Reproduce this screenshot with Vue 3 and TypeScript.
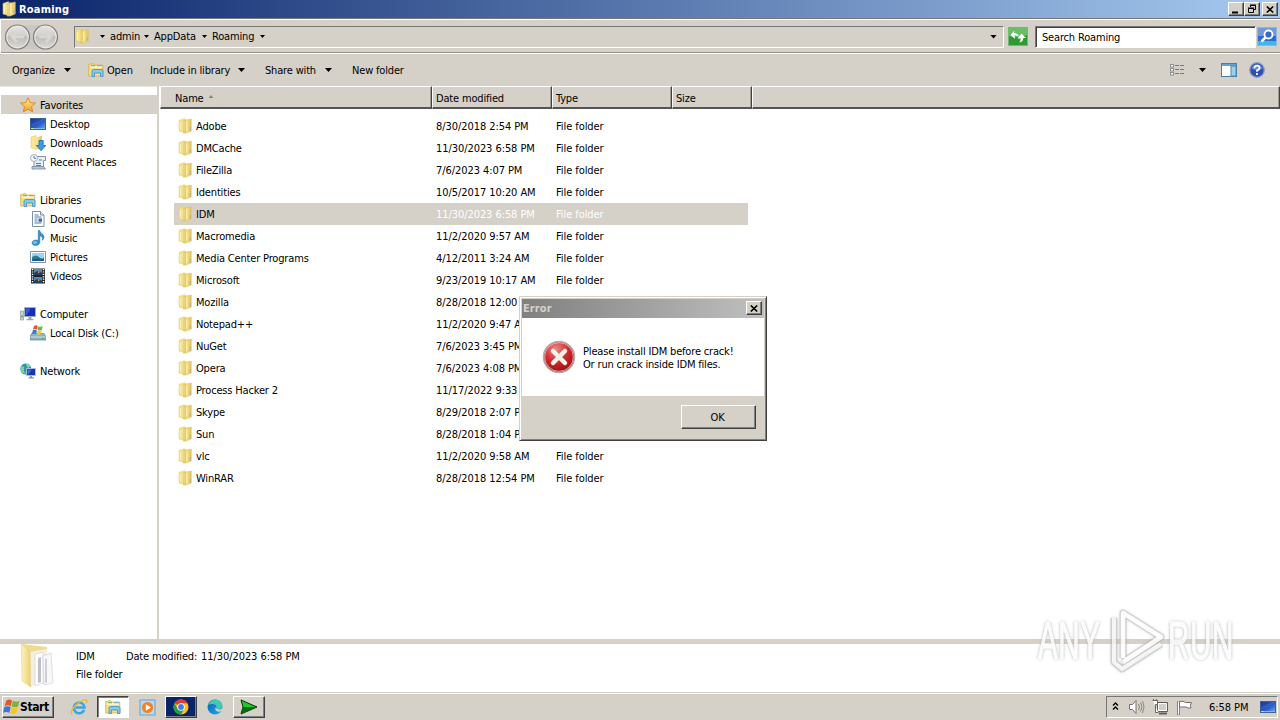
<script setup lang="ts">
interface FileRow { name: string; date: string; selected?: boolean }
interface NavItem { label: string; icon?: string; root?: boolean; active?: boolean }

const files: FileRow[] = [
  { name: 'Adobe', date: '8/30/2018 2:54 PM' },
  { name: 'DMCache', date: '11/30/2023 6:58 PM' },
  { name: 'FileZilla', date: '7/6/2023 4:07 PM' },
  { name: 'Identities', date: '10/5/2017 10:20 AM' },
  { name: 'IDM', date: '11/30/2023 6:58 PM', selected: true },
  { name: 'Macromedia', date: '11/2/2020 9:57 AM' },
  { name: 'Media Center Programs', date: '4/12/2011 3:24 AM' },
  { name: 'Microsoft', date: '9/23/2019 10:17 AM' },
  { name: 'Mozilla', date: '8/28/2018 12:00 PM' },
  { name: 'Notepad++', date: '11/2/2020 9:47 AM' },
  { name: 'NuGet', date: '7/6/2023 3:45 PM' },
  { name: 'Opera', date: '7/6/2023 4:08 PM' },
  { name: 'Process Hacker 2', date: '11/17/2022 9:33 AM' },
  { name: 'Skype', date: '8/29/2018 2:07 PM' },
  { name: 'Sun', date: '8/28/2018 1:04 PM' },
  { name: 'vlc', date: '11/2/2020 9:58 AM' },
  { name: 'WinRAR', date: '8/28/2018 12:54 PM' },
]

const nav: NavItem[] = [
  { label: 'Favorites', icon: 'star', root: true, active: true },
  { label: 'Desktop', icon: 'desktop' },
  { label: 'Downloads', icon: 'downloads' },
  { label: 'Recent Places', icon: 'recent' },
  { label: '' },
  { label: 'Libraries', icon: 'library', root: true },
  { label: 'Documents', icon: 'document' },
  { label: 'Music', icon: 'music' },
  { label: 'Pictures', icon: 'picture' },
  { label: 'Videos', icon: 'video' },
  { label: '' },
  { label: 'Computer', icon: 'computer', root: true },
  { label: 'Local Disk (C:)', icon: 'disk' },
  { label: '' },
  { label: 'Network', icon: 'network', root: true },
]

const crumbs: string[] = ['admin', 'AppData', 'Roaming']
</script>

<template>
  <div class="screen">
    <svg class="defs" width="0" height="0" aria-hidden="true">
      <defs>
        <linearGradient id="gFold" x1="0" x2="1"><stop offset="0" stop-color="#f8e99f" /><stop offset="1" stop-color="#e2c254" /></linearGradient>
        <linearGradient id="gFoldBig" x1="0" x2="1"><stop offset="0" stop-color="#fdf3bd" /><stop offset="1" stop-color="#e9cf75" /></linearGradient>
        <linearGradient id="gScreen" x1="0" y1="0" x2="1" y2="1"><stop offset="0" stop-color="#17328f" /><stop offset=".6" stop-color="#2f62c9" /><stop offset="1" stop-color="#7db3ee" /></linearGradient>
        <linearGradient id="gNavBtn" x1="0" y1="0" x2="0" y2="1"><stop offset="0" stop-color="#e6e5e2" /><stop offset=".45" stop-color="#d2cfcb" /><stop offset=".5" stop-color="#bebcb8" /><stop offset="1" stop-color="#dddbd8" /></linearGradient>
        <radialGradient id="gErr" cx=".4" cy=".25" r=".8"><stop offset="0" stop-color="#e98a86" /><stop offset=".5" stop-color="#cf2a2c" /><stop offset="1" stop-color="#98090f" /></radialGradient>
        <linearGradient id="gEdge" x1="0" y1="0" x2="1" y2="1"><stop offset="0" stop-color="#0c59a4" /><stop offset=".6" stop-color="#1b8ed8" /><stop offset="1" stop-color="#2fa8e0" /></linearGradient>
        <linearGradient id="gStar" x1="0" y1="0" x2="0" y2="1"><stop offset="0" stop-color="#fff3a0" /><stop offset="1" stop-color="#f59a1d" /></linearGradient>
      </defs>
      <symbol id="i-folder" viewBox="0 0 16 16">
        <path d="M2 2.500 7.500 .6V14.500L2 13z" fill="#f4e289" stroke="#e2cb74" stroke-width=".5" />
        <path d="M6 2.500 9.500 1V14.500L7 15.500 6 15z" fill="#e4c559" />
        <path d="M7 3v10.500" stroke="#f8ebac" stroke-width=".8" />
        <path d="M8.500 2.200 14.300 1V13L8.500 15.300z" fill="url(#gFold)" stroke="#dcbf5e" stroke-width=".5" />
        <path d="M13 9v3.500" stroke="#9db0a8" stroke-width=".9" />
        <path d="M3.500 4v7.500M9.800 4v8" stroke="#fdf6cf" stroke-width=".8" />
      </symbol>
      <symbol id="i-star" viewBox="0 0 16 16"><path d="M8 .8l2.200 4.800 5.200.5-3.900 3.500 1.200 5.300L8 12.200l-4.700 2.700 1.200-5.300L.6 6.100l5.200-.5z" fill="url(#gStar)" stroke="#dd8928" stroke-width="1" /></symbol>
      <symbol id="i-desktop" viewBox="0 0 16 16"><rect x=".5" y="2.500" width="15" height="11" fill="url(#gScreen)" stroke="#3c629c" /><path d="M1 12.500h14" stroke="#7fb7e8" /><path d="M1.500 12.500h2" stroke="#c8f0a0" /><path d="M2 9Q8 7 14 3" stroke="#4a78d2" stroke-width=".6" fill="none" /></symbol>
      <symbol id="i-downloads" viewBox="0 0 16 16"><path d="M1 2 6 .5v14L1 13z" fill="#f8e795" stroke="#e3c65c" stroke-width=".5" /><path d="M6 2.500 12 .8V13l-6 1.700z" fill="url(#gFold)" /><path d="M9 5.500h4.200v5h2.600L11 15.700 6.300 10.500H9z" fill="#3d9ae4" stroke="#1f68b2" stroke-width=".8" /></symbol>
      <symbol id="i-recent" viewBox="0 0 16 16"><path d="M4 2.500h11.500v4H13.500V14H4z" fill="#e6f0f8" stroke="#7f93a5" /><path d="M2 12.500h11.500l2 2.500H2z" fill="#b5cbdc" stroke="#75899b" stroke-width=".8" /><circle cx="4" cy="4" r="3.500" fill="#f7fbff" stroke="#9fb0bd" /><path d="M4 2v2.300h2M6 9.500h5M9 6h3M6 11.500h5" fill="none" stroke="#4c6d8e" stroke-width=".9" /></symbol>
      <symbol id="i-library" viewBox="0 0 16 16"><path d="M.7 2.500 5.500 1.500l1 1.500h8.300v11H.7z" fill="#f5df83" stroke="#d4b24b" stroke-width=".8" /><path d="M2 5h12" stroke="#fff" stroke-width="1.200" /><path d="M3 3.700h4" stroke="#5cb85c" /><path d="M9 3.700h5" stroke="#69aae0" /><path d="M4 14.500V9.200q0-1.700 1.700-1.700h7.600q1.700 0 1.700 1.700v5.300h-2.500V11h-6v3.500z" fill="#86c9ef" stroke="#3b8dc2" stroke-width=".8" /></symbol>
      <symbol id="i-document" viewBox="0 0 16 16"><path d="M2.500.5h8L14 4v11.500H2.500z" fill="#fff" stroke="#7891a8" /><path d="M10.500.5V4H14" fill="#dce8f2" stroke="#7891a8" /><path d="M4.500 4h4M4.500 6h7M4.500 8h3M4.500 10h3M4.500 12h7" stroke="#5a7da5" /><path d="M8.500 7.500H12v3.300H8.500z" fill="#396b9e" /></symbol>
      <symbol id="i-music" viewBox="0 0 16 16"><path d="M8.300.5h1.400c.3 3 4.300 3.300 4.300 6.500 0 1.500-.7 2.400-1.600 3.400.7-2.900-.7-4-2.600-4.700v6.500c0 2-2 3.300-4.200 3.300-2 0-3.600-.9-3.600-2.500C2 11.300 3.800 10 6 10c.9 0 1.700.2 2.300.5z" fill="#2d95d6" stroke="#1869a8" stroke-width=".5" /><ellipse cx="5" cy="12.500" rx="2" ry="1.200" fill="#7fc9f2" /></symbol>
      <symbol id="i-picture" viewBox="0 0 16 16"><path d="M.5 2.500h15v11H.5z" fill="#fff" stroke="#7e95a6" /><path d="M2 4h12v8H2z" fill="#9cd5f4" /><path d="M2 8q4-3 7 0t5 0v4H2z" fill="#327e8a" /><path d="M2 10.700q6-2.500 12 0V12H2z" fill="#165c98" /></symbol>
      <symbol id="i-video" viewBox="0 0 16 16"><path d="M1 .5h14v15H1z" fill="#202529" /><path d="M4 1h8v6H4zM4 9h8v6H4z" fill="#538db2" /><path d="M4 5q4-4 8 0v2H4zM4 13q4-4 8 0v2H4z" fill="#243f65" /><path d="M8 3l2 1-2 1.500zM8 11l2 1-2 1.500z" fill="#d79b5c" /><path d="M2.500 1v14M13.500 1v14" stroke="#fff" stroke-width="1.500" stroke-dasharray="1.200 1.200" /></symbol>
      <symbol id="i-computer" viewBox="0 0 16 16"><path d="M.5 5h3v9h-3z" fill="#c7d2d8" stroke="#8c9ba4" stroke-width=".7" /><path d="M1 10.500h2" stroke="#6abb45" stroke-width="2" /><path d="M4.500 1.500h11v9h-11z" fill="#1630b0" stroke="#a5b0bd" /><path d="M5.500 2.500h5L7 9H5.500z" fill="#365bd2" /><path d="M8.500 11h3v2h2v1.200h-7V13h2z" fill="#9ba7ae" /></symbol>
      <symbol id="i-disk" viewBox="0 0 16 16"><path d="M1.500 8.500h12.500l2 3.500v3H0V12z" fill="#8fb3c3" stroke="#5e7f8f" stroke-width=".7" /><path d="M.5 12h15" stroke="#d0e2ea" /><path d="M12 13.500h2" stroke="#45c545" stroke-width="1.400" /><use href="#i-flag" x="1.500" y="0" width="12" height="10.500" /></symbol>
      <symbol id="i-flag" viewBox="0 0 16 15"><path d="M3 1.500Q6-.5 8.500 1.300L7.300 6.700Q4.500 5 1.500 6.700z" fill="#e8552c" /><path d="M9.300 1.700Q12 3.300 15.500 1.600L14.200 7Q11 8.500 8.200 7z" fill="#76b43b" /><path d="M1.300 7.500Q4.500 5.800 7.200 7.700L6 13Q3.500 11.300 0 12.900z" fill="#3a78d4" /><path d="M8 7.900Q11 9.400 14 7.800L12.700 13.200Q9.500 15 6.800 13.200z" fill="#f8c429" /></symbol>
      <symbol id="i-network" viewBox="0 0 16 16"><circle cx="5.800" cy="6" r="5.500" fill="#2994b8" /><path d="M2 3q3 .5 2 3t2 4q-4 1-5-2.500T2 3zM6 .5q4 0 4.500 3L8 5 6.500 3z" fill="#7fd39b" /><path d="M6.500 5.500h9v7h-9z" fill="#1735b5" stroke="#a9c0d4" /><path d="M7.500 6.500h4l-3 5h-1z" fill="#466edb" /><path d="M10 13h2v1.200h2v1.300H8.500v-1.300H10z" fill="#8796a0" /></symbol>
      <symbol id="i-cross" viewBox="0 0 8 7"><path d="M.8.500 7.200 6.500M7.200.5.8 6.500" stroke="#000" stroke-width="1.600" /></symbol>
    </svg>

    <header class="titlebar">
      <svg class="ic"><use href="#i-folder" /></svg>
      <span class="title">Roaming</span>
      <div class="winbtns">
        <span class="wb"><svg width="10" height="10"><path d="M1 8.500h6" stroke="#000" stroke-width="2" /></svg></span>
        <span class="wb"><svg width="10" height="10"><path d="M3.500 3V1.500h5v4H7M3 1h6" fill="none" stroke="#000" /><path d="M1.500 4.500h5v4h-5zM1 4h6" fill="none" stroke="#000" /></svg></span>
        <span class="wb gap"><svg width="8" height="7"><use href="#i-cross" /></svg></span>
      </div>
    </header>

    <div class="address">
      <svg class="navbtns" width="60" height="30">
        <path d="M10 3h38v24H10z" fill="#c4c1bd" opacity=".6" />
        <circle cx="15.500" cy="15" r="12" fill="url(#gNavBtn)" stroke="#83817e" stroke-width="1.200" />
        <circle cx="43.500" cy="15" r="12" fill="url(#gNavBtn)" stroke="#83817e" stroke-width="1.200" />
        <circle cx="15.500" cy="15" r="10.700" fill="none" stroke="#eceae7" />
        <circle cx="43.500" cy="15" r="10.700" fill="none" stroke="#eceae7" />
        <path d="M22 15H10m5-5-5 5 5 5M37 15h12m-5-5 5 5-5 5" fill="none" stroke="#d9d7d3" stroke-width="2.500" />
      </svg>
      <div class="crumbbar">
        <svg class="ic"><use href="#i-folder" /></svg>
        <template v-for="c in crumbs" :key="c">
          <i class="arr small" /><span :class="['crumb', c.toLowerCase()]">{{ c }}</span>
        </template>
        <i class="arr small" />
        <i class="arr end" />
      </div>
      <svg class="refresh" width="20" height="19"><rect x=".5" y=".5" width="19" height="18" fill="#2f9a35" stroke="#75b677" /><path d="M1 1h18v7q-9 4-18 1z" fill="#67c069" /><path d="M2.500 8 6.500 3.500 6 6q4 0 5 3.500-2-1.500-4.500-1L7 12z" fill="#fff" /><path d="M9.500 11.500 13.500 6.500 18 11h-2.700q0 4-4.300 4.500 2-1.500 1.500-4z" fill="#fff" /></svg>
      <div class="search">Search Roaming</div>
      <svg class="mag" width="20" height="19"><rect x=".5" y=".5" width="19" height="18" fill="#2a6bd0" stroke="#91b4e5" /><path d="M1 1h18v8H1z" fill="#7198dc" /><path d="M1 14h18v4H1z" fill="#42b4e8" /><circle cx="11.500" cy="7.500" r="4" fill="#3a68c6" stroke="#fff" stroke-width="1.800" /><path d="M8.500 10.500 4.500 14.500" stroke="#fff" stroke-width="2.500" /></svg>
    </div>

    <div class="toolbar">
      <span class="t org">Organize</span><i class="arr" />
      <svg class="ic opn"><use href="#i-library" /></svg><span class="t open">Open</span>
      <span class="t incl">Include in library</span><i class="arr" />
      <span class="t share">Share with</span><i class="arr" />
      <span class="t newf">New folder</span>
      <div class="tools">
        <svg width="17" height="14"><g fill="#fff" stroke="#8c8d91"><rect x=".5" y="1.500" width="3" height="2.500" /><rect x=".5" y="5.500" width="3" height="2.500" /><rect x=".5" y="9.500" width="3" height="2.500" /></g><path d="M5 2.500h10M5 6.500h10M5 10.500h10" stroke="#77777d" stroke-dasharray="4 1" /></svg>
        <i class="arr" />
        <svg class="pane" width="16" height="14"><rect x=".5" y=".5" width="15" height="13" fill="#fff" stroke="#4d7da3" /><path d="M1 2h14" stroke="#6ea0c4" stroke-width="2" /><path d="M10 3h5v10h-5z" fill="#9bd1ee" stroke="#5387ab" /></svg>
        <svg class="help" width="16" height="16"><circle cx="8" cy="8" r="7.300" fill="#2a50b8" stroke="#8f9fc6" stroke-width="1.300" /><path d="M2.500 7a5.600 5.600 0 0 1 11 0q-5 2-11 0z" fill="#6288d8" /><path d="M5.500 6.200q0-2.500 2.500-2.500t2.500 2.200Q10.500 7.500 8 8.300v1.400M8 11v2" fill="none" stroke="#fff" stroke-width="1.800" /></svg>
      </div>
    </div>

    <main class="body">
      <nav class="side">
        <div v-for="(n, i) in nav" :key="i" :class="['nav', { root: n.root, active: n.active }]">
          <svg v-if="n.icon" class="ic"><use :href="'#i-' + n.icon" /></svg>
          <span>{{ n.label }}</span>
        </div>
      </nav>
      <section class="list">
        <div class="cols">
          <div class="col name">Name <i class="up" /></div>
          <div class="col date">Date modified</div>
          <div class="col type">Type</div>
          <div class="col size">Size</div>
          <div class="col rest" />
        </div>
        <div class="rows">
          <div v-for="f in files" :key="f.name" :class="['row', { sel: f.selected }]">
            <svg class="ic"><use href="#i-folder" /></svg>
            <span class="fname">{{ f.name }}</span>
            <span class="fdate">{{ f.date }}</span>
            <span class="ftype">File folder</span>
          </div>
        </div>
      </section>
    </main>

    <footer class="details">
      <svg class="bigfold" width="36" height="46">
        <path d="M2 1 27 4v5H9v31L2 36z" fill="#eedb8d" />
        <path d="M9 9l18-3v34l-15 3z" fill="#f3efe2" />
        <path d="M15 11l8-2v31l-8 3z" fill="#fdfdfd" stroke="#d3d4d8" stroke-width=".7" />
        <path d="M18 15l3-1v25l-3 1z" fill="#bcc1ca" />
        <path d="M23 13l8-3 2 30-9 2z" fill="#f8f8f9" stroke="#d3d4d8" stroke-width=".7" />
        <path d="M25 16l2-.5v24l-2 .5z" fill="#ccd0d8" />
        <path d="M1.500 1 10 8l1 36-9-6z" fill="url(#gFoldBig)" stroke="#e5d083" stroke-width=".6" />
      </svg>
      <div class="dl"><span class="dname">IDM</span><span>File folder</span></div>
      <div class="dm"><span class="lab">Date modified:</span><span class="wide">11/30/2023 6:58 PM</span></div>
    </footer>

    <div class="taskbar">
      <div class="start"><svg width="17" height="16"><use href="#i-flag" /></svg><b>Start</b></div>
      <svg class="tb ie" width="18" height="18"><path d="M14.200 12A5.400 5.400 0 1 1 14.600 9.500H5.500" fill="none" stroke="#38a5e5" stroke-width="2.500" /><path d="M2 16.500Q-.5 13 6.500 6.500T17 2.500q0 1.500-1 3" fill="none" stroke="#efb92e" stroke-width="1.300" /></svg>
      <div class="task pressed"><svg class="ic"><use href="#i-library" /></svg></div>
      <svg class="tb wmp" width="17" height="17"><rect x="1" y="1" width="15" height="15" fill="#b7d8ef" stroke="#6aa2cd" /><circle cx="8.500" cy="8.500" r="5.600" fill="#f58220" /><path d="M6.800 5.200 12 8.500l-5.200 3.300z" fill="#fff" /></svg>
      <div class="task chrome"><svg width="16" height="16" viewBox="0 0 16 16"><circle cx="8" cy="8" r="7.500" fill="#fbc116" /><path d="M8 8 1.500 4.250A7.500 7.500 0 0 1 14.500 4.250H8z" fill="#e33b2e" /><path d="M1.500 4.250A7.500 7.500 0 0 0 8 15.500L11.200 9.800 8 8 4.700 9.800z" fill="#269b4e" /><circle cx="8" cy="8" r="3.800" fill="#fff" /><circle cx="8" cy="8" r="2.900" fill="#3f7fe8" /></svg></div>
      <svg class="tb edge" width="16" height="16"><circle cx="8" cy="8" r="7.500" fill="url(#gEdge)" /><path d="M1 6Q3.500.6 8.500.5q6.500.4 7 6Q15.500 10 11.500 10.300q-3 0-2-2.300Q9.500 5 5.500 5 3 5 1 6z" fill="#42c9b4" /><path d="M9 8q-2 3 1.500 4.500 2.500.8 5.500-1.500l-.5-1.300Q12.500 11 10 10 8.800 9.200 9 8z" fill="#d5d0c8" /></svg>
      <div class="task run"><svg width="18" height="16"><path d="M1 1l16 7-16 7 2-7z" fill="#1bcb22" stroke="#08320a" /><path d="M3 8h14L1 15z" fill="#086d10" /></svg></div>
      <div class="tray">
        <svg width="8" height="10"><path d="M1 3.500 3.500 1 6 3.500M1 7.500 3.500 5 6 7.500" fill="none" stroke="#000" stroke-width="1.400" /></svg>
        <svg class="vol" width="18" height="16"><path d="M1.500 5.500h3L8 1.500v13l-3.500-4h-3z" fill="#fff" stroke="#77746f" /><path d="M10.500 5q2 3 0 6M12.500 3.500q3 4.500 0 9M14.500 2q3 6 0 12" fill="none" stroke="#8a8782" /></svg>
        <svg class="net" width="17" height="16"><path d="M5.500 3.500h10v9h-10z" fill="#d2cfca" stroke="#5f5c58" /><path d="M6.500 4.500h8v7h-8z" fill="none" stroke="#fff" /><path d="M7 14.500h8" stroke="#5f5c58" stroke-width="2" /><path d="M.5 1.500h5v4h-2v8h3" fill="#fff" stroke="#6b6864" /><path d="M1.500 0v2M4.500 0v2" stroke="#6b6864" /></svg>
        <svg class="flag" width="17" height="17"><path d="M2.500 2v14" stroke="#85827d" stroke-width="3" /><path d="M2.500 2.500v13" stroke="#fff" /><path d="M3.500 2.500q4-1 6 1h6q-2 3-.5 5.500-3 .5-5-1H3.500z" fill="#fff" stroke="#74716c" /></svg>
        <span class="clock">6:58 PM</span>
        <svg class="ic"><use href="#i-desktop" /></svg>
      </div>
    </div>

    <div class="dialog">
      <div class="dtitle"><b>Error</b><span class="wb"><svg width="8" height="7"><use href="#i-cross" /></svg></span></div>
      <div class="dbody">
        <svg width="34" height="34"><circle cx="17" cy="17" r="15.500" fill="url(#gErr)" stroke="#b8aaaa" stroke-width="1.500" /><circle cx="17" cy="17" r="14.300" fill="none" stroke="#e8b9b8" stroke-width=".8" /><path d="M11 11 23 23M23 11 11 23" stroke="#f2f2e8" stroke-width="4.500" stroke-linecap="round" /></svg>
        <p>Please install IDM before crack!<br />Or run crack inside IDM files.</p>
      </div>
      <div class="dfoot"><button type="button">OK</button></div>
    </div>

    <div class="mark">
      <span class="any">ANY</span>
      <svg class="play" width="60" height="70">
        <g fill="none" stroke-linejoin="round">
          <path d="M6 12V56L14 63 53 38M15 52V7L53 31 15 56" stroke="#aaa" stroke-width="7" opacity=".45" />
          <path d="M6 12V56L14 63 53 38" stroke="#f4f4f4" stroke-width="4" />
          <path d="M15 52V7L53 31 15 56" stroke="#fdfdfd" stroke-width="4.500" />
        </g>
      </svg>
      <span class="runw">RUN</span>
    </div>
  </div>
</template>

<style>
html, body { margin: 0; overflow: hidden; }
</style>

<style scoped>
.screen { position: relative; width: 1280px; height: 720px; overflow: hidden; display: flex; flex-direction: column; background: #d5d0c8; color: #000; font: 11px/13px "DejaVu Sans Condensed", "DejaVu Sans", sans-serif; font-stretch: condensed; letter-spacing: -.17px; white-space: nowrap; }
.screen * { box-sizing: border-box; }
.defs { position: absolute; }
.ic { width: 16px; height: 16px; flex: none; display: block; }
svg { flex: none; }

.titlebar { height: 18px; flex: none; display: flex; align-items: center; padding: 0 2px 0 1px; background: linear-gradient(90deg, #0a246a, #a6caf0); }
.title { margin-left: 2px; color: #fff; font-weight: bold; letter-spacing: .2px; }
.winbtns { margin-left: auto; display: flex; }
.wb { width: 16px; height: 14px; display: flex; align-items: center; justify-content: center; background: #d5d0c8; border: 1px solid; border-color: #fff #404040 #404040 #fff; box-shadow: inset -1px -1px #808080; }
.wb.gap { margin-left: 2px; }

.address { height: 36px; flex: none; display: flex; align-items: center; padding: 1px 1px 0 2px; border-top: 1px solid #777; border-bottom: 1px solid #fff; box-shadow: inset 0 1px #fff, inset 1px 0 #fff, inset 0 -1px #96938e; }
.navbtns { margin-top: 1px; }
.crumbbar { margin-left: 12px; width: 930px; height: 22px; display: flex; align-items: center; border: 1px solid; border-color: #777 #fff #fff #777; }
.crumbbar .ic { margin: -2px 9px 0 -1px; }
.crumb { margin: 0 5px 0 4px; }
.crumb.admin { width: 28px; }
.crumb.appdata { width: 42px; }
.crumb.roaming { width: 42px; }
.arr { flex: none; display: inline-block; width: 7px; height: 4px; background: #000; clip-path: polygon(0 0, 100% 0, 50% 100%); }
.arr.small { width: 5px; height: 3px; margin-left: 1px; margin-right: 1px; }
.arr.end { margin-left: auto; margin-right: 6px; }
.refresh { margin-left: 4px; }
.search { margin-left: 7px; width: 221px; height: 22px; padding: 4px 0 0 6px; background: #fff; border: 1px solid; border-color: #777 #fff #fff #777; box-shadow: inset 1px 1px #404040; }
.mag { margin-left: 1px; }

.toolbar { height: 32px; flex: none; display: flex; align-items: center; padding-left: 12px; }
.t { flex: none; }
.org { width: 52px; }
.opn { margin-left: 17px; }
.open { margin-left: 3px; width: 43px; }
.incl { width: 88px; }
.share { margin-left: 20px; width: 60px; }
.newf { margin-left: 20px; }
.tools { margin-left: auto; margin-right: 15px; display: flex; align-items: center; }
.tools .arr { margin-left: 12px; }
.pane { margin-left: 15px; }
.help { margin-left: 12px; }

.body { flex: 1; min-height: 0; display: flex; background: #fff; }
.side { width: 159px; margin-right: 1px; flex: none; padding: 9px 0 0 1px; border-right: 2px solid #d5d0c8; box-shadow: inset 0 1px #e9e6e2; }
.nav { height: 19px; padding: 1px 0 0 29px; display: flex; align-items: center; gap: 4px; }
.nav .ic { margin-top: -1px; }
.nav span { padding-top: 1px; }
.nav.root { padding-left: 19px; }
.nav.active { background: #d5d0c8; }
.list { flex: 1; min-width: 0; }
.cols { height: 23px; display: flex; background: #d5d0c8; }
.col { height: 23px; padding: 5px 0 0 3px; border: solid; border-width: 1px 1px 2px 1px; border-color: #fff #404040 #555 #fff; box-shadow: inset -1px 0 #a09c96; }
.name { width: 272px; padding-left: 14px; }
.date, .type { width: 120px; }
.size { width: 80px; }
.rest { flex: 1; }
.up { display: inline-block; width: 5px; height: 3px; margin: 0 0 4px 2px; background: #8a8783; clip-path: polygon(50% 0, 100% 100%, 0 100%); }
.rows { padding: 6px 0 0 14px; }
.row { width: 574px; height: 22px; display: flex; align-items: center; padding-left: 3px; }
.row.sel { background: #d5d0c8; }
.row .ic { margin-top: -1px; }
.fname { width: 240px; margin-left: 3px; }
.fdate { width: 120px; }
.fdate, .ftype, .wide, .clock { letter-spacing: -.07px; }
.sel .fdate, .sel .ftype { color: #fff; }

.details { height: 54px; flex: none; display: flex; padding-left: 20px; background: #fff; border-top: 5px solid #d5d0c8; border-bottom: 1px solid #d5d0c8; }
.bigfold { margin-top: -1px; }
.dl { margin: 6px 0 0 20px; width: 50px; display: flex; flex-direction: column; gap: 5px; }
.dm { margin-top: 6px; display: flex; gap: 5px; }
.lab { width: 70px; }

.taskbar { height: 27px; flex: none; display: flex; align-items: center; padding: 0 2px; border-top: 1px solid #fff; }
.start, .task { height: 22px; display: flex; align-items: center; justify-content: center; border: 1px solid; border-color: #fff #404040 #404040 #fff; box-shadow: inset -1px -1px #808080; }
.start { width: 52px; justify-content: flex-start; padding-left: 0; gap: 0; }
.start b { font-size: 12px; letter-spacing: -.4px; }
.ie { margin-left: 16px; margin-right: 1px; }
.task { width: 32px; }
.pressed { margin-left: 8px; background: #fff; border-color: #404040 #fff #fff #404040; box-shadow: inset 1px 1px #808080; }
.wmp { margin-left: 10px; }
.chrome { margin-left: 9px; background: #0a246a; }
.edge { margin-left: 10px; }
.run { margin-left: 10px; }
.tray { margin-left: auto; width: 172px; height: 22px; display: flex; align-items: center; padding-left: 5px; border: 1px solid; border-color: #777 #fff #fff #777; }
.vol { margin-left: 8px; }
.net { margin-left: 6px; }
.flag { margin-left: 7px; }
.clock { margin-left: 16px; width: 51px; }

.dialog { position: absolute; left: 519px; top: 296px; width: 248px; height: 145px; padding: 1px; display: flex; flex-direction: column; background: #d5d0c8; border: 1px solid; border-color: #d5d0c8 #404040 #404040 #d5d0c8; box-shadow: inset 1px 1px #fff, inset -1px -1px #808080; }
.dtitle { height: 19px; margin: 1px 1px 0; padding: 0 2px 1px 1px; display: flex; align-items: center; justify-content: space-between; background: linear-gradient(90deg, #808080, #c0c0c0); color: #d5d0c8; }
.dtitle b { letter-spacing: .1px; padding-top: 1px; }
.dtitle .wb { color: #000; }
.dbody { height: 78px; margin: 0 1px; padding-left: 20px; display: flex; align-items: center; background: #fff; }
.dbody p { margin: 2px 0 0 7px; }
.dfoot { flex: 1; display: flex; justify-content: flex-end; padding: 9px 9px 0 0; }
button { width: 75px; height: 24px; padding: 0 2px 0 0; background: #d5d0c8; border: 1px solid; border-color: #fff #404040 #404040 #fff; box-shadow: inset -1px -1px #808080; color: #000; font: inherit; letter-spacing: inherit; }

.mark { position: absolute; left: 1038px; top: 606px; display: flex; align-items: center; font: 53px/70px "Liberation Sans", Arial, sans-serif; color: #fcfcfc; letter-spacing: 1px; text-shadow: 0 0 3px #999, 0 0 5px #bbb; opacity: .85; }
.any, .runw { display: block; width: 70px; transform: scaleX(.56); transform-origin: 0 50%; -webkit-text-stroke: 1.5px #fcfcfc; }
.play { filter: drop-shadow(0 0 1.5px #bbb); }
</style>
